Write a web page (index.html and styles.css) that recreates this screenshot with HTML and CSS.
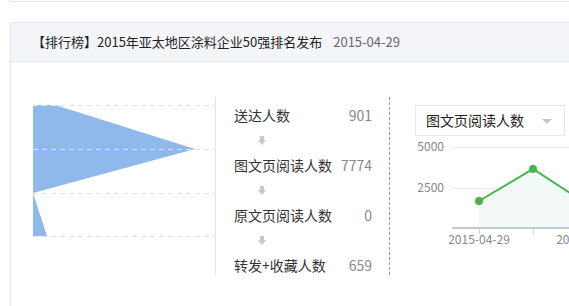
FILE: index.html
```html
<!DOCTYPE html>
<html lang="zh-CN">
<head>
    <meta charset="UTF-8">
    <title>图文分析</title>
    <link rel="stylesheet" href="styles.css">
</head>
<body>
    <div class="prev-card"></div>

    <div class="card">
        <div class="card-hd">
            <span class="title">【排行榜】2015年亚太地区涂料企业50强排名发布</span>
            <span class="date">2015-04-29</span>
        </div>

        <div class="card-bd">
            <div class="funnel">
                <svg width="182" height="178" viewBox="0 0 182 178">
                    <polygon points="0,8 22,8 162,52 0,96 14,139 0,139" fill="#8fb9eb"/>
                    <g stroke="#dde3ef" stroke-width="1" stroke-dasharray="5,4">
                        <line x1="0" y1="8.5" x2="182" y2="8.5"/>
                        <line x1="0" y1="52.5" x2="182" y2="52.5"/>
                        <line x1="0" y1="96.5" x2="182" y2="96.5"/>
                        <line x1="0" y1="139.5" x2="182" y2="139.5"/>
                    </g>
                </svg>
            </div>

            <ul class="steps">
                <li class="step"><span>送达人数</span><span class="num">901</span></li>
                <li class="arrow"><svg width="8" height="9" viewBox="0 0 8 9"><rect x="2" y="0" width="4" height="5" fill="#c8c8c8"/><polygon points="0,4 8,4 4,9" fill="#c8c8c8"/></svg></li>
                <li class="step"><span>图文页阅读人数</span><span class="num">7774</span></li>
                <li class="arrow"><svg width="8" height="9" viewBox="0 0 8 9"><rect x="2" y="0" width="4" height="5" fill="#c8c8c8"/><polygon points="0,4 8,4 4,9" fill="#c8c8c8"/></svg></li>
                <li class="step"><span>原文页阅读人数</span><span class="num">0</span></li>
                <li class="arrow"><svg width="8" height="9" viewBox="0 0 8 9"><rect x="2" y="0" width="4" height="5" fill="#c8c8c8"/><polygon points="0,4 8,4 4,9" fill="#c8c8c8"/></svg></li>
                <li class="step"><span>转发+收藏人数</span><span class="num">659</span></li>
            </ul>

            <div class="trend">
                <div class="dropdown">
                    <span>图文页阅读人数</span>
                    <i class="caret"></i>
                </div>
                <svg class="chart" width="154" height="113" viewBox="0 0 154 113">
                    <text x="29" y="14" text-anchor="end">5000</text>
                    <text x="29" y="55" text-anchor="end">2500</text>
                    <line x1="37" y1="10.5" x2="154" y2="10.5" stroke="#ececec"/>
                    <line x1="37" y1="51.5" x2="154" y2="51.5" stroke="#ececec"/>
                    <polygon points="64,64 118,32 172,67 172,90 64,90" fill="#f3f8f8"/>
                    <rect x="37" y="90" width="143" height="2" fill="#c8c8c8"/>
                    <line x1="64.5" y1="92" x2="64.5" y2="97" stroke="#d6d6d6"/>
                    <line x1="118.5" y1="92" x2="118.5" y2="97" stroke="#d6d6d6"/>
                    <polyline points="64,64 118,32 172,67" fill="none" stroke="#44b549" stroke-width="2"/>
                    <circle cx="64" cy="64" r="4" fill="#44b549"/>
                    <circle cx="118" cy="32" r="4" fill="#44b549"/>
                    <text x="64" y="107" text-anchor="middle">2015-04-29</text>
                    <text x="172" y="107" text-anchor="middle">2015-05-01</text>
                </svg>
            </div>
        </div>
    </div>
</body>
</html>
```

FILE: styles.css
```css
body {
    margin: 0;
    width: 569px;
    height: 306px;
    overflow: hidden;
    background-color: #fff;
    color: #222;
    font-family: "Microsoft YaHei", "Noto Sans CJK SC", sans-serif;
    font-size: 14px;
}

.prev-card {
    height: 1px;
    margin-left: 10px;
    border-left: 1px solid #e7e7eb;
    border-bottom: 1px solid #e7e7eb;
}

.card {
    margin: 20px 0 0 10px;
    height: 300px;
    border: 1px solid #e7e7eb;
    border-right: none;
    overflow: hidden;
}

.card-hd {
    height: 38px;
    line-height: 38px;
    padding-left: 21px;
    background-color: #f4f5f9;
    border-bottom: 1px solid #e7e7eb;
    font-size: 13px;
    white-space: nowrap;
}

.date {
    margin-left: 8px;
    color: #666;
}

.card-bd {
    display: flex;
    align-items: flex-start;
    padding-top: 35px;
}

.funnel {
    padding-left: 22px;
    height: 178px;
    border-right: 1px solid #e4e4e4;
}

.funnel svg {
    display: block;
}

.steps {
    list-style: none;
    margin: 0;
    padding: 8px 17px 0 18px;
    width: 139px;
    height: 170px;
    border-right: 1px dashed #999;
}

.step {
    display: flex;
    justify-content: space-between;
    height: 20px;
    line-height: 20px;
    color: #333;
}

.num {
    color: #888;
}

.arrow {
    height: 30px;
    display: flex;
    align-items: center;
    padding-left: 24px;
}

.arrow svg {
    display: block;
}

.trend {
    padding: 8px 0 0 25px;
}

.dropdown {
    width: 138px;
    height: 29px;
    line-height: 29px;
    padding-left: 10px;
    border: 1px solid #e7e7eb;
    position: relative;
    color: #222;
}

.caret {
    position: absolute;
    right: 12px;
    top: 13px;
    width: 0;
    height: 0;
    border-left: 5px solid transparent;
    border-right: 5px solid transparent;
    border-top: 5px solid #c8c8c8;
}

.chart {
    display: block;
    margin-top: 1px;
}

.chart text {
    font-size: 12px;
    fill: #888;
    font-family: "Microsoft YaHei", "Noto Sans CJK SC", sans-serif;
}
```
